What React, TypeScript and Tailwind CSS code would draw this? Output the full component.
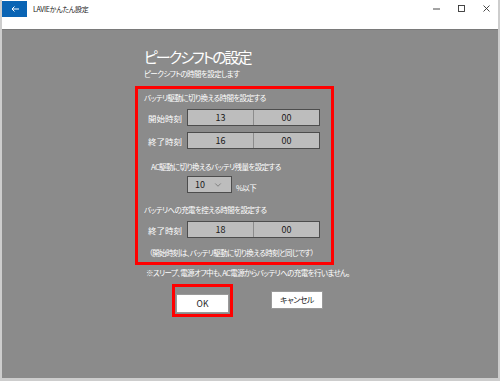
import { ChevronDown } from 'lucide-react';

const FONT = "font-['Noto_Sans_CJK_JP','Noto_Sans',sans-serif] [font-feature-settings:'palt']";
// kana-heavy lines run narrow in the original UI font, so squeeze them a little
const SMALL = 'text-[7.5px] leading-[12px] tracking-[-0.6px] text-white';

function TimeRow({ label, hour, minute }: { label: string; hour: string; minute: string }) {
    return (
        <div className="flex items-center">
            <span className="w-[49px] pl-[10px] text-[8.5px] leading-[12px] text-white">{label}</span>
            <div className="flex h-[17px] w-[133px] border border-[#4d4d4d] bg-[#bdbdbd] text-[9px] text-[#1a1a1a]">
                <div className="flex flex-1 items-center justify-center border-r border-[#8c8c8c]">{hour}</div>
                <div className="flex flex-1 items-center justify-center">{minute}</div>
            </div>
        </div>
    );
}

export default function App() {
    return (
        <div className={`flex h-[381px] w-[500px] flex-col border-x-2 border-b-[3px] border-[#cdcdcd] bg-white ${FONT}`}>
            {/* title bar */}
            <div className="flex h-[29px] shrink-0 items-start bg-white">
                <div className="mt-[1px] flex h-[16px] w-[25px] items-center justify-center bg-[#0a64b4]">
                    <svg width="8" height="6" viewBox="0 0 8 6" fill="none" stroke="white" strokeWidth="1">
                        <path d="M8 3H1M3.5 0.5L1 3l2.5 2.5" />
                    </svg>
                </div>
                <span className="ml-[6px] mt-[5px] text-[7px] leading-[9px] tracking-[-0.3px] text-[#222]">LAVIEかんたん設定</span>
                <div className="ml-auto mr-[8px] mt-[5px] flex items-center gap-[18px] text-[#333]">
                    <svg width="7" height="7" viewBox="0 0 7 7" stroke="currentColor" strokeWidth="0.9">
                        <path d="M0 4h7" />
                    </svg>
                    <svg width="7" height="7" viewBox="0 0 7 7" fill="none" stroke="currentColor" strokeWidth="0.9">
                        <rect x="0.5" y="0.5" width="6" height="6" />
                    </svg>
                    <svg width="7" height="7" viewBox="0 0 7 7" stroke="currentColor" strokeWidth="0.9">
                        <path d="M0.5 0.5l6 6M6.5 0.5l-6 6" />
                    </svg>
                </div>
            </div>

            {/* body */}
            <div className="flex-1 border-t border-[#7a7a7a] bg-[#8b8b8b] pl-[133px] pt-[17px]">
                <h1 className="pl-[9px] text-[15px] leading-[20px] font-normal tracking-[-2px] text-white">ピークシフトの設定</h1>
                <p className={`mt-[1px] pl-[9px] ${SMALL} text-[#f2f2f2]`}>ピークシフトの時間を設定します</p>

                <div className="mt-[6px] w-[199px] border-[3px] border-[#ff0000] pb-[3px] pt-[3px]">
                    <p className={`pl-[6px] ${SMALL}`}>バッテリ駆動に切り換える時間を設定する</p>
                    <div className="mt-[5px] flex flex-col gap-[6px]">
                        <TimeRow label="開始時刻" hour="13" minute="00" />
                        <TimeRow label="終了時刻" hour="16" minute="00" />
                    </div>

                    <p className={`mt-[12px] pl-[13px] ${SMALL}`}>AC駆動に切り換えるバッテリ残量を設定する</p>
                    <div className="mt-[3px] flex items-end pl-[49px]">
                        <div className="flex h-[17px] w-[45px] items-center justify-between border border-[#4d4d4d] bg-[#bdbdbd] pl-[7px] pr-[8px] text-[9px] text-[#1a1a1a]">
                            <span>10</span>
                            <ChevronDown size={10} strokeWidth={1.4} className="text-[#555]" />
                        </div>
                        <span className={`mb-[-1px] ml-[4px] ${SMALL}`}>%以下</span>
                    </div>

                    <p className={`mt-[11px] pl-[6px] ${SMALL}`}>バッテリへの充電を控える時間を設定する</p>
                    <div className="mt-[5px]">
                        <TimeRow label="終了時刻" hour="18" minute="00" />
                    </div>

                    <p className={`mt-[9px] pl-[11px] ${SMALL}`}>（開始時刻は、バッテリ駆動に切り換える時刻と同じです）</p>
                </div>

                <p className={`mt-[2px] pl-[11px] ${SMALL}`}>※スリープ、電源オフ中も、AC電源からバッテリへの充電を行いません。</p>

                <div className="mt-[5px] flex items-center pl-[37px]">
                    <div className="border-[3px] border-[#ff0000] p-[1px]">
                        <button type="button" className="h-[19px] w-[53px] border border-[#9a9a9a] bg-white text-[8.5px] text-[#222]">
                            OK
                        </button>
                    </div>
                    <button type="button" className="ml-[38px] h-[18px] w-[52px] border border-[#9a9a9a] bg-white text-[8px] tracking-[-0.5px] text-[#222]">
                        キャンセル
                    </button>
                </div>
            </div>
        </div>
    );
}
